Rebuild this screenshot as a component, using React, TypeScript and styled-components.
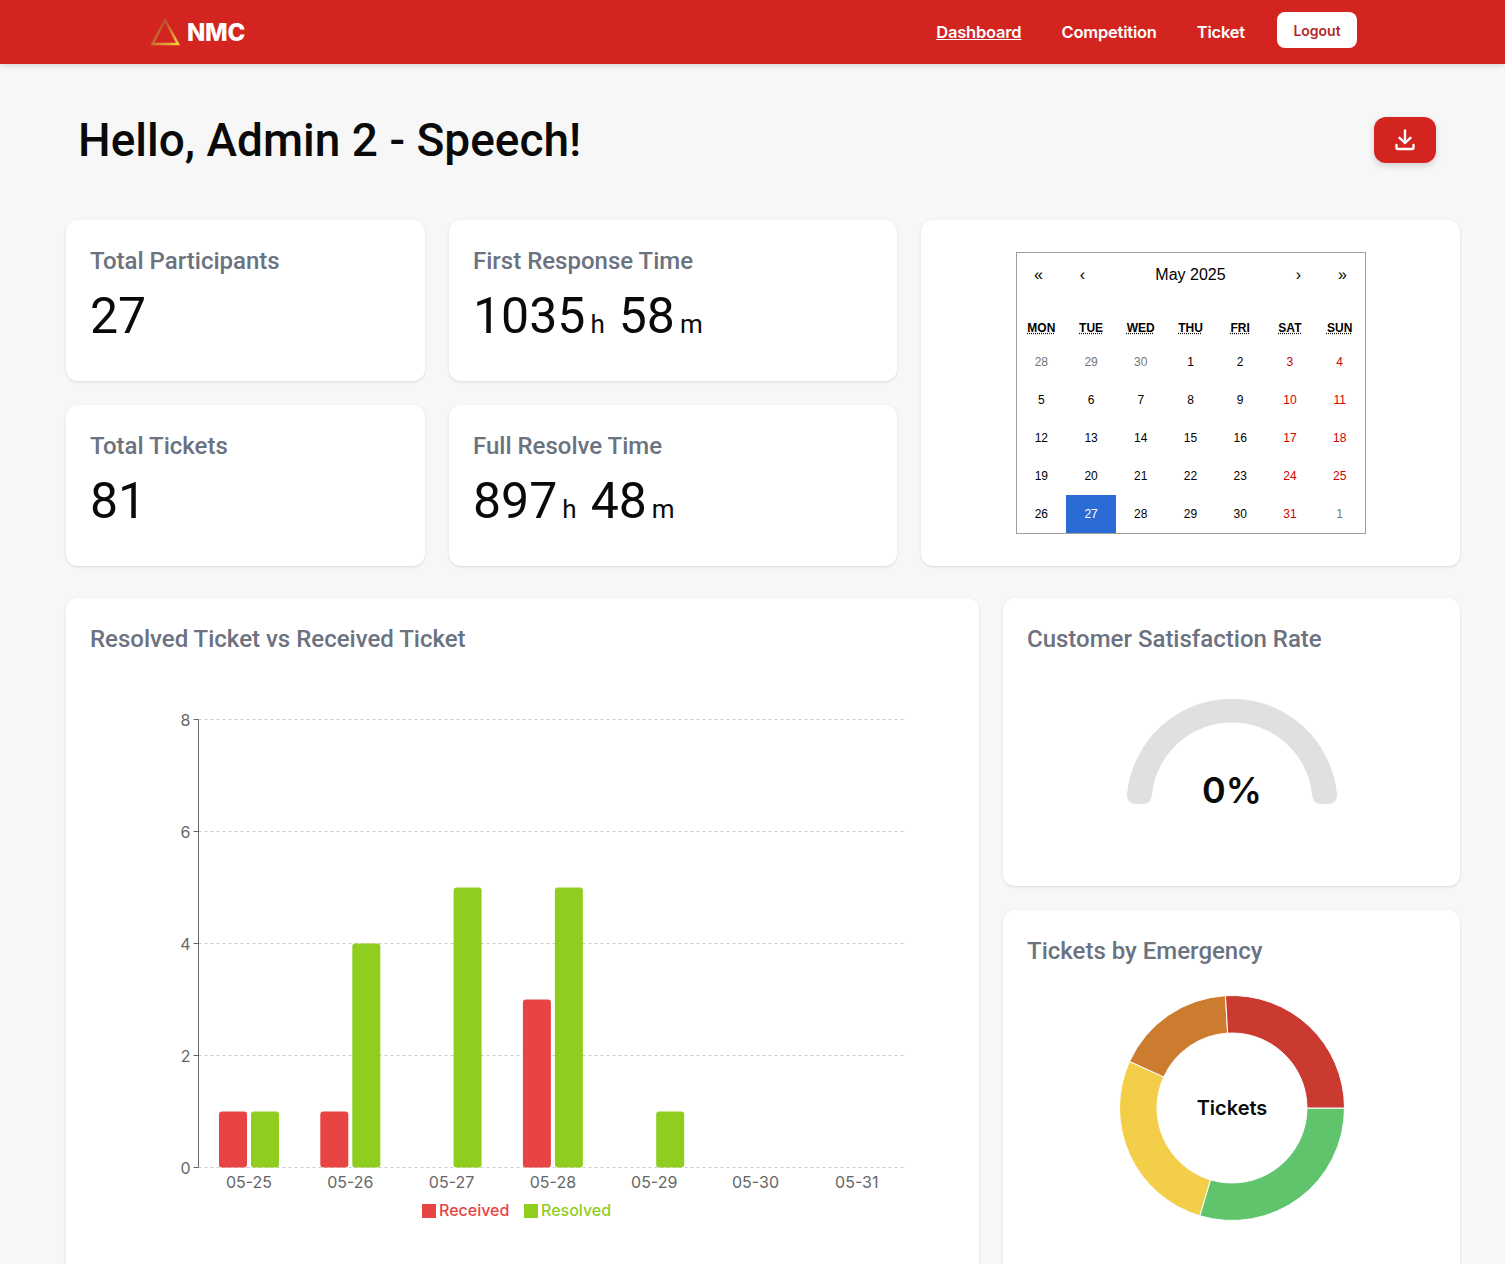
import styled, { createGlobalStyle } from 'styled-components'

const GlobalStyle = createGlobalStyle`
  html, body {
    margin: 0;
    padding: 0;
    background: #f7f7f7;
    font-family: 'Inter', 'Liberation Sans', sans-serif;
  }
  * { box-sizing: border-box; }
`

const Navbar = styled.header`
  height: 64px;
  background: #d32420;
  box-shadow: 0 2px 5px rgb(0 0 0 / 12%);
  display: flex;
  align-items: center;
  justify-content: space-between;
  padding: 0 148px 0 150px;
`

const Logo = styled.div`
  display: flex;
  align-items: center;
  gap: 6px;
  color: #fff;
  font-size: 24px;
  font-weight: 800;
  letter-spacing: -0.3px;
`

const NavLinks = styled.nav`
  display: flex;
  align-items: center;
  gap: 40px;
`

const NavLink = styled.a<{ $active?: boolean }>`
  color: #fff;
  font-size: 16.5px;
  font-weight: 600;
  letter-spacing: -0.2px;
  text-decoration: ${({ $active }) => ($active ? 'underline' : 'none')};
`

const LogoutButton = styled.button`
  width: 80px;
  height: 36px;
  margin: 0 0 4px -8px;
  background: #fff;
  border: none;
  border-radius: 8px;
  color: #b3282b;
  font-family: inherit;
  font-size: 14px;
  font-weight: 600;
`

const Main = styled.main`
  padding: 53px 45px 40px 66px;
`

const TitleRow = styled.div`
  display: flex;
  align-items: center;
  justify-content: space-between;
  height: 46px;
  margin-bottom: 57px;
  padding: 0 24px 0 12px;
`

const Title = styled.h1`
  margin: 0;
  color: #0a0a0a;
  font-family: 'Roboto', sans-serif;
  font-size: 46px;
  font-weight: 500;
  letter-spacing: 0;
`

const DownloadButton = styled.button`
  width: 62px;
  height: 46px;
  background: #d32420;
  border: none;
  border-radius: 12px;
  box-shadow: 0 3px 6px rgb(0 0 0 / 15%);
  display: flex;
  align-items: center;
  justify-content: center;
`

const Card = styled.section`
  background: #fff;
  border-radius: 12px;
  box-shadow: 0 1px 3px rgb(0 0 0 / 12%);
  padding: 24px;
`

const TopGrid = styled.div`
  display: grid;
  grid-template-columns: 359px 448px 1fr;
  grid-auto-rows: 161px;
  gap: 24px;
  margin-bottom: 32px;
`

const CalendarCard = styled(Card)`
  grid-column: 3;
  grid-row: 1 / span 2;
  display: flex;
  justify-content: center;
  padding: 32px 0 0;
`

const CardTitle = styled.h2`
  margin: 0;
  color: #6b7280;
  font-family: 'Roboto', sans-serif;
  font-size: 24px;
  font-weight: 500;
  line-height: 34px;
`

const StatValue = styled.div`
  margin-top: 8px;
  color: #0a0a0a;
  font-family: 'Roboto', sans-serif;
  font-size: 50px;
  font-weight: 400;
  line-height: 60px;
`

const StatUnit = styled.span`
  margin: 0 14px 0 5px;
  font-size: 26px;
`

const Calendar = styled.div`
  width: 350px;
  height: 282px;
  border: 1px solid #a0a096;
  font-family: 'Liberation Sans', Arial, sans-serif;
  color: #000;
`

const CalendarNav = styled.div`
  display: flex;
  height: 44px;
  margin-bottom: 16px;
`

const NavArrow = styled.span`
  width: 44px;
  display: flex;
  align-items: center;
  justify-content: center;
  font-size: 16px;
`

const MonthLabel = styled.span`
  flex: 1;
  display: flex;
  align-items: center;
  justify-content: center;
  font-size: 16px;
`

const CalendarGrid = styled.div`
  display: grid;
  grid-template-columns: repeat(7, 1fr);
`

const Weekday = styled.abbr`
  height: 30px;
  display: flex;
  align-items: center;
  justify-content: center;
  font-size: 12px;
  font-weight: 700;
  text-decoration: underline dotted;
`

const Tile = styled.div<{ $tone: 'normal' | 'weekend' | 'muted' | 'today' }>`
  height: 38px;
  display: flex;
  align-items: center;
  justify-content: center;
  font-size: 12px;
  background: ${({ $tone }) => ($tone === 'today' ? '#2b6bd6' : 'transparent')};
  color: ${({ $tone }) =>
    $tone === 'today' ? '#fff' : $tone === 'weekend' ? '#d10000' : $tone === 'muted' ? '#757575' : '#000'};
`

const LowerGrid = styled.div`
  display: grid;
  grid-template-columns: 913px 1fr;
  gap: 24px;
`

const SideColumn = styled.div`
  display: flex;
  flex-direction: column;
  gap: 24px;
`

const ChartSvg = styled.svg`
  display: block;
  margin-top: 24px;
`

const GaugeCard = styled(Card)`
  height: 288px;
`

const GaugeSvg = styled.svg`
  display: block;
  margin: 38px auto 0;
`

const DonutCard = styled(Card)`
  height: 400px;
`

const DonutSvg = styled.svg`
  display: block;
  margin: 27px auto 0;
`

const WEEKDAYS = ['MON', 'TUE', 'WED', 'THU', 'FRI', 'SAT', 'SUN']

const DAYS: number[] = [28, 29, 30, ...Array.from({ length: 31 }, (_, i) => i + 1), 1]

const getTone = (index: number) => {
  if (index < 3 || index === DAYS.length - 1) return 'muted'
  if (DAYS[index] === 27) return 'today'
  return index % 7 >= 5 ? 'weekend' : 'normal'
}

const RED = '#e94444'
const GREEN = '#8fce1f'

const BARS = [
  { label: '05-25', received: 1, resolved: 1 },
  { label: '05-26', received: 1, resolved: 4 },
  { label: '05-27', received: 0, resolved: 5 },
  { label: '05-28', received: 3, resolved: 5 },
  { label: '05-29', received: 0, resolved: 1 },
  { label: '05-30', received: 0, resolved: 0 },
  { label: '05-31', received: 0, resolved: 0 },
]

const AXIS_X = 108.5
const BASE_Y = 487.5
const UNIT = 56
const SLOT = 101.3
const FIRST_CENTER = 159

const TicketsChart = () => (
  <ChartSvg width={865} height={560} viewBox="0 0 865 560">
    {[0, 2, 4, 6, 8].map((tick) => {
      const y = BASE_Y - tick * UNIT
      return (
        <g key={tick}>
          <line x1={AXIS_X} x2={817} y1={y} y2={y} stroke="#ccc" strokeDasharray="3 3" />
          <line x1={AXIS_X - 5} x2={AXIS_X} y1={y} y2={y} stroke="#666" />
          <text x={AXIS_X - 8} y={y + 6} textAnchor="end" fontSize={16} fill="#666">
            {tick}
          </text>
        </g>
      )
    })}
    <line x1={AXIS_X} x2={AXIS_X} y1={BASE_Y - 8 * UNIT} y2={BASE_Y} stroke="#666" />
    {BARS.map((bar, index) => {
      const center = FIRST_CENTER + SLOT * index
      return (
        <g key={bar.label}>
          {bar.received > 0 && (
            <rect x={center - 30} y={BASE_Y - bar.received * UNIT} width={28} height={bar.received * UNIT} rx={3} fill={RED} />
          )}
          {bar.resolved > 0 && (
            <rect x={center + 2} y={BASE_Y - bar.resolved * UNIT} width={28} height={bar.resolved * UNIT} rx={3} fill={GREEN} />
          )}
          <text x={center} y={BASE_Y + 20} textAnchor="middle" fontSize={16} fill="#666">
            {bar.label}
          </text>
        </g>
      )
    })}
    <rect x={332} y={524} width={14} height={14} fill={RED} />
    <text x={349} y={536} fontSize={16} fontWeight={500} fill={RED}>
      Received
    </text>
    <rect x={434} y={524} width={14} height={14} fill={GREEN} />
    <text x={451} y={536} fontSize={16} fontWeight={500} fill={GREEN}>
      Resolved
    </text>
  </ChartSvg>
)

const Gauge = () => (
  <GaugeSvg width={240} height={120} viewBox="0 0 240 120">
    <path
      d="M15 100 A105.5 105.5 0 0 1 225 100 Q225.5 110 215 110 L210 110 Q200.5 110 200 100 A80.5 80.5 0 0 0 40 100 Q39.5 110 30 110 L25 110 Q14.5 110 15 100 Z"
      fill="#e0e0e0"
    />
    <text x={120} y={109} textAnchor="middle" fontSize={36} fontWeight={600} fill="#0a0a0a">
      0%
    </text>
  </GaugeSvg>
)

const SEGMENTS = [
  { value: 24, color: '#5fc46b' },
  { value: 22, color: '#f3ce49' },
  { value: 14, color: '#cc7c2e' },
  { value: 21, color: '#cb3a31' },
]

const polar = (radius: number, degrees: number) => {
  const rad = (degrees * Math.PI) / 180
  return `${120 + radius * Math.cos(rad)} ${113 + radius * Math.sin(rad)}`
}

const Donut = () => {
  const total = SEGMENTS.reduce((sum, s) => sum + s.value, 0)
  let angle = 0
  return (
    <DonutSvg width={240} height={232} viewBox="0 0 240 232">
      {SEGMENTS.map((segment) => {
        const start = angle
        angle += (segment.value / total) * 360
        const large = angle - start > 180 ? 1 : 0
        return (
          <path
            key={segment.color}
            d={`M${polar(112.5, start)} A112.5 112.5 0 ${large} 1 ${polar(112.5, angle)} L${polar(75, angle)} A75 75 0 ${large} 0 ${polar(75, start)} Z`}
            fill={segment.color}
            stroke="#fff"
          />
        )
      })}
      <text x={120} y={120} textAnchor="middle" fontSize={20} fontWeight={600} fill="#0a0a0a">
        Tickets
      </text>
    </DonutSvg>
  )
}

export default function App() {
  return (
    <>
      <GlobalStyle />
      <Navbar>
        <Logo>
          <svg width="31" height="30" viewBox="0 0 31 30">
            <defs>
              <linearGradient id="logoGradient" x1="0" y1="0" x2="1" y2="1">
                <stop offset="0" stopColor="#a8322a" />
                <stop offset="0.5" stopColor="#c9702e" />
                <stop offset="1" stopColor="#f4d03f" />
              </linearGradient>
            </defs>
            <path d="M15 3 L28 27 H2.5 Z" fill="none" stroke="url(#logoGradient)" strokeWidth="2.5" />
          </svg>
          NMC
        </Logo>
        <NavLinks>
          <NavLink $active>Dashboard</NavLink>
          <NavLink>Competition</NavLink>
          <NavLink>Ticket</NavLink>
          <LogoutButton>Logout</LogoutButton>
        </NavLinks>
      </Navbar>
      <Main>
        <TitleRow>
          <Title>Hello, Admin 2 - Speech!</Title>
          <DownloadButton aria-label="Download">
            <svg width="24" height="24" viewBox="0 0 24 24" fill="none" stroke="#fff" strokeWidth="2.4" strokeLinecap="round" strokeLinejoin="round">
              <path d="M12 2.5V15" />
              <path d="M6.5 9.8 12 15l5.500-5.200" />
              <path d="M3.500 17v2.500a1.500 1.500 0 0 0 1.500 1.500h14a1.500 1.500 0 0 0 1.500-1.500V17" />
            </svg>
          </DownloadButton>
        </TitleRow>
        <TopGrid>
          <Card>
            <CardTitle>Total Participants</CardTitle>
            <StatValue>27</StatValue>
          </Card>
          <Card>
            <CardTitle>First Response Time</CardTitle>
            <StatValue>
              1035<StatUnit>h</StatUnit>58<StatUnit>m</StatUnit>
            </StatValue>
          </Card>
          <CalendarCard>
            <Calendar>
              <CalendarNav>
                <NavArrow>«</NavArrow>
                <NavArrow>‹</NavArrow>
                <MonthLabel>May 2025</MonthLabel>
                <NavArrow>›</NavArrow>
                <NavArrow>»</NavArrow>
              </CalendarNav>
              <CalendarGrid>
                {WEEKDAYS.map((day) => (
                  <Weekday key={day}>{day}</Weekday>
                ))}
                {DAYS.map((day, index) => (
                  <Tile key={index} $tone={getTone(index)}>
                    {day}
                  </Tile>
                ))}
              </CalendarGrid>
            </Calendar>
          </CalendarCard>
          <Card>
            <CardTitle>Total Tickets</CardTitle>
            <StatValue>81</StatValue>
          </Card>
          <Card>
            <CardTitle>Full Resolve Time</CardTitle>
            <StatValue>
              897<StatUnit>h</StatUnit>48<StatUnit>m</StatUnit>
            </StatValue>
          </Card>
        </TopGrid>
        <LowerGrid>
          <Card>
            <CardTitle>Resolved Ticket vs Received Ticket</CardTitle>
            <TicketsChart />
          </Card>
          <SideColumn>
            <GaugeCard>
              <CardTitle>Customer Satisfaction Rate</CardTitle>
              <Gauge />
            </GaugeCard>
            <DonutCard>
              <CardTitle>Tickets by Emergency</CardTitle>
              <Donut />
            </DonutCard>
          </SideColumn>
        </LowerGrid>
      </Main>
    </>
  )
}
